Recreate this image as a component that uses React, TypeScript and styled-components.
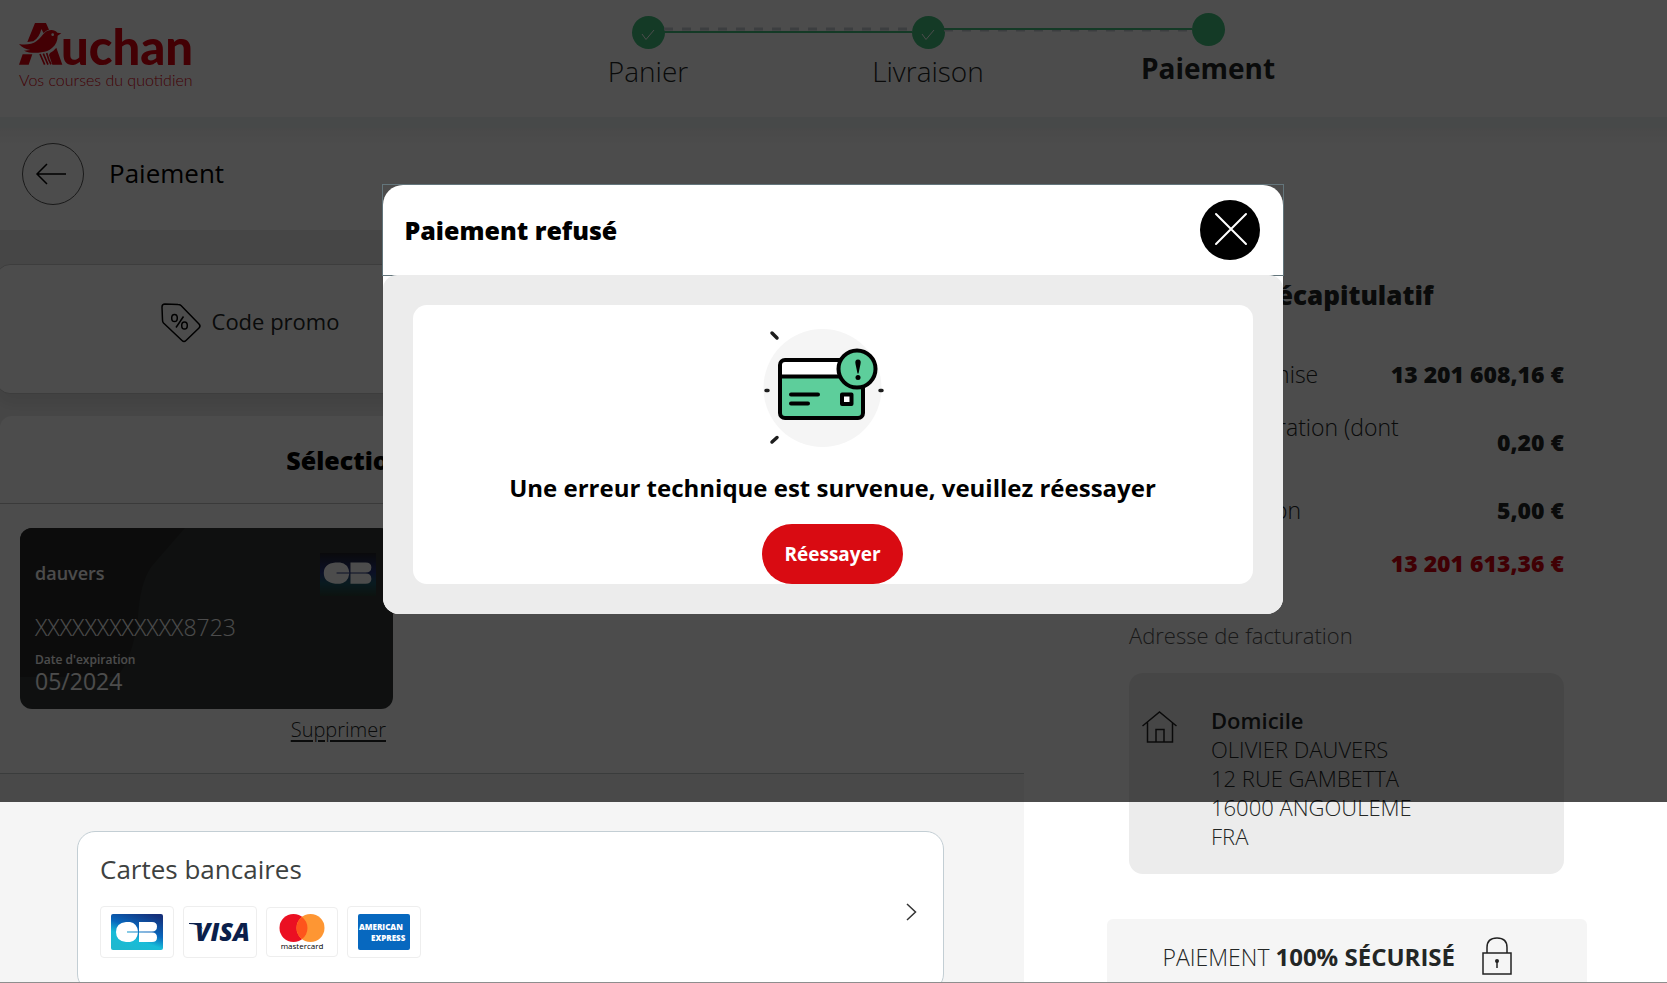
import React from 'react';
import styled, { createGlobalStyle } from 'styled-components';

const GlobalStyle = createGlobalStyle`
  *, *::before, *::after { box-sizing: border-box; }
  body { margin: 0; background: #fff; color: #232625; font-family: "Open Sans", "Noto Sans", sans-serif; }
  h1, h2, h3, p, ol, dl, dd, address { margin: 0; padding: 0; font-style: normal; }
  button { font-family: inherit; color: inherit; cursor: pointer; }
  svg { display: block; flex: none; overflow: visible; }
`;

const Page = styled.div`
  position: relative;
  height: 100vh;
  overflow: hidden;
  border-bottom: 1px solid #8e8e8e;
`;

/* ---------- header ---------- */

const Header = styled.header`
  display: flex;
  align-items: flex-start;
  height: 117px;
  padding: 0 7px 0 18px;
`;

const HomeLink = styled.a`
  padding-top: 22px;
`;

const Steps = styled.ol`
  display: flex;
  flex: 1;
  justify-content: center;
  padding-top: 13px;
  list-style: none;
`;

const Step = styled.li<{ $current?: boolean }>`
  position: relative;
  display: flex;
  flex-direction: column;
  align-items: center;
  width: 280px;
  padding-top: ${(p) => (p.$current ? 0 : 3)}px;
  font-size: 28px;
  line-height: 38px;
  font-weight: ${(p) => (p.$current ? 700 : 300)};
`;

const StepDot = styled.span`
  display: flex;
  align-items: center;
  justify-content: center;
  width: 33px;
  height: 33px;
  margin-bottom: 3px;
  padding-top: 4px;
  border-radius: 50%;
  background: #43c17f;
`;

const StepLink = styled.svg`
  position: absolute;
  top: 14px;
  left: calc(50% + 16px);
  width: calc(100% - 32px);
  height: 6px;
`;

const HeaderFade = styled.div`
  height: 26px;
  background: linear-gradient(#eff3f6 0, #eff3f6 11px, #f6f6f6 12px, #fdfdfd 26px);
`;

/* ---------- columns ---------- */

const Columns = styled.main`
  display: grid;
  grid-template-columns: minmax(0, 1024fr) minmax(0, 643fr);
`;

const Payment = styled.div`
  background: #ececec;
`;

const TitleBar = styled.div`
  display: flex;
  align-items: flex-start;
  gap: 25px;
  height: 87px;
  padding-left: 22px;
  background: #fff;
`;

const BackButton = styled.button`
  display: flex;
  align-items: center;
  justify-content: center;
  width: 62px;
  height: 62px;
  padding: 0 4px 0 0;
  border: 1px solid #555;
  border-radius: 50%;
  background: none;
`;

const PageTitle = styled.h1`
  font-size: 26px;
  line-height: 60px;
  font-weight: 500;
  color: #000;
`;

const PromoButton = styled.button`
  display: flex;
  align-items: center;
  justify-content: center;
  gap: 11px;
  width: 508px;
  height: 130px;
  margin: 34px 0 22px -4px;
  padding: 0 0 12px;
  border: 1px solid #ccc;
  border-radius: 14px;
  background: #fff;
  box-shadow: 0 10px 16px rgba(0, 0, 0, 0.08);
  font-size: 22px;
  font-weight: 500;
`;

const PromoLabel = styled.span`
  padding-bottom: 4px;
`;

const Saved = styled.section`
  border-bottom: 1px solid #c4c8c8;
  border-radius: 12px 0 0 0;
  background: #fff;
`;

const SectionTitle = styled.h2`
  padding: 26px 0 25px;
  border-bottom: 1px solid #c4c4c4;
  font-size: 25px;
  line-height: 36px;
  font-weight: 800;
  text-align: center;
  color: #000;
`;

const SavedItem = styled.div`
  display: flex;
  flex-direction: column;
  align-items: flex-end;
  width: 373px;
  margin: 0 20px;
  padding: 24px 0 29px;
`;

const BankCard = styled.article`
  position: relative;
  display: flex;
  justify-content: space-between;
  align-items: flex-start;
  width: 100%;
  height: 181px;
  padding: 25px 17px 0 15px;
  overflow: hidden;
  border-radius: 12px;
  background: #333837;
  color: #fff;
`;

const CardShade = styled.svg`
  position: absolute;
  inset: 0;
`;

const CardText = styled.div`
  position: relative;
  padding-top: 7px;
`;

const CardHolder = styled.p`
  font-size: 18px;
  line-height: 26px;
  font-weight: 600;
`;

const CardNumber = styled.p`
  margin: 26px 0 10px;
  font-size: 23px;
  line-height: 30px;
  font-weight: 300;
`;

const CardLabel = styled.p`
  font-size: 12px;
  line-height: 16px;
  font-weight: 600;
`;

const CardExpiry = styled.p`
  font-size: 23px;
  line-height: 26px;
  font-weight: 500;
`;

const RemoveLink = styled.a`
  margin: 7px 7px 0 0;
  font-size: 20px;
  line-height: 28px;
  font-weight: 300;
  color: #232625;
  text-underline-offset: 3px;
`;

const Methods = styled.section`
  padding: 57px 80px 60px 77px;
  background: #f5f5f5;
`;

const MethodButton = styled.button`
  display: flex;
  align-items: center;
  justify-content: space-between;
  width: 100%;
  padding: 19px 26px 33px 22px;
  border: 1px solid #c3ced4;
  border-radius: 18px;
  background: #fff;
  text-align: left;
`;

const Chevron = styled.svg`
  margin-top: 14px;
`;

const MethodName = styled.span`
  display: block;
  margin-bottom: 19px;
  font-size: 26px;
  line-height: 36px;
  color: #3d4140;
`;

const Brands = styled.span`
  display: flex;
  align-items: center;
  gap: 9px;
`;

const Brand = styled.span<{ $compact?: boolean }>`
  display: flex;
  align-items: center;
  justify-content: center;
  width: ${(p) => (p.$compact ? 72 : 74)}px;
  height: ${(p) => (p.$compact ? 50 : 52)}px;
  border: 1px solid #eee;
  border-radius: 4px;
`;

/* ---------- summary ---------- */

const Summary = styled.aside`
  display: flex;
  flex-direction: column;
  align-items: center;
  padding: 134px 0 0 2px;
`;

const SummaryTitle = styled.h2`
  font-size: 26px;
  line-height: 36px;
  font-weight: 800;
`;

const Amounts = styled.dl`
  display: flex;
  flex-direction: column;
  gap: 23px;
  width: 435px;
  margin-top: 46px;
  font-size: 23px;
  line-height: 30px;
`;

const Amount = styled.div<{ $total?: boolean }>`
  display: flex;
  align-items: center;
  justify-content: space-between;
  color: ${(p) => (p.$total ? '#d8000f' : 'inherit')};

  dt { max-width: 280px; font-weight: 300; }
  dd { font-weight: 800; }
`;

const AddressTitle = styled.h3`
  width: 435px;
  margin: 42px 0 23px;
  font-size: 22px;
  line-height: 30px;
  font-weight: 300;
  color: #555;
`;

const AddressCard = styled.div`
  display: flex;
  align-items: flex-start;
  gap: 34px;
  width: 435px;
  padding: 33px 13px 23px;
  border-radius: 14px;
  background: #ececec;
  font-size: 22px;
  line-height: 29px;
  font-weight: 300;

  svg { margin-top: 5px; }
  strong { font-weight: 600; }
`;

const Secure = styled.div`
  display: flex;
  align-items: center;
  gap: 27px;
  width: 480px;
  height: 74px;
  margin-top: 45px;
  padding-left: 56px;
  border-radius: 6px;
  background: #f5f5f5;
  font-size: 23px;
  font-weight: 300;

  strong { font-size: 24px; font-weight: 700; }
`;

/* ---------- dialog ---------- */

const Backdrop = styled.div`
  position: absolute;
  inset: 0 0 auto;
  display: flex;
  justify-content: center;
  align-items: flex-start;
  height: 802px;
  padding: 184px 2px 0 0;
  background: rgba(0, 0, 0, 0.7);
`;

const Dialog = styled.section`
  display: flex;
  flex-direction: column;
  align-items: center;
  color: #000;
`;

const DialogFrame = styled.div`
  border: 1px solid #63757b;
`;

const DialogHeader = styled.header`
  display: flex;
  align-items: center;
  justify-content: space-between;
  width: 900px;
  height: 90px;
  padding: 0 23px 0 22px;
  border-radius: 20px 20px 0 0;
  background: #fff;
`;

const DialogTitle = styled.h2`
  font-size: 25px;
  line-height: 34px;
  font-weight: 800;
`;

const CloseButton = styled.button`
  display: flex;
  align-items: center;
  justify-content: center;
  width: 60px;
  height: 60px;
  padding: 0 0 3px 2px;
  border: 0;
  border-radius: 50%;
  background: #000;
`;

const DialogBody = styled.div`
  width: 900px;
  border-radius: 0 0 16px 16px;
  background: #fff;
`;

const DialogCanvas = styled.div`
  margin-top: -1px;
  padding: 30px;
  border-radius: 14px 14px 16px 16px;
  background: #ececec;
`;

const Panel = styled.div`
  display: flex;
  flex-direction: column;
  align-items: center;
  padding-top: 8px;
  border-radius: 14px;
  background: #fff;
`;

const Message = styled.p`
  margin: 12px 0 19px;
  font-size: 24px;
  line-height: 34px;
  font-weight: 700;
`;

const RetryButton = styled.button`
  width: 141px;
  height: 60px;
  padding: 0;
  border: 0;
  border-radius: 30px;
  background: #d90b12;
  color: #fff;
  font-size: 19px;
  font-weight: 700;
`;

/* ---------- drawings ---------- */

const LogoWord = styled.text`
  font: 900 49px Lato, sans-serif;
`;
const LogoTagline = styled.text`
  font: 300 16px Lato, sans-serif;
`;
const BrandWord = styled.text<{ $size: number }>`
  font-family: "Open Sans", sans-serif;
  font-size: ${(p) => p.$size}px;
  font-weight: 800;
`;
const BrandCaption = styled.text`
  font: 500 8px "Open Sans", sans-serif;
`;

const Logo = () => (
  <svg width="178" height="70" viewBox="18 22 178 70" fill="#e1000f">
    <g transform="scale(.3333)">
      <path d="M105 69H138L147 89C139 91 134 95 131 100L124 87C120 104 113 116 100 124L82 126Z" />
      <path d="M57 132C75 136 97 133 109 124C121 115 127 104 134 98C144 88 164 87 172 98L184 100L173 107C173 122 168 134 156 144C147 152 138 155 124 157C106 160 86 159 72 152L91 150C78 148 65 142 57 132Z" />
      <path d="M68 163H97L86 194H57Z" />
      <path d="M150 159Q162 152 169 143L187 194H157L147 165Z" />
      <path d="M120 162L134 194M130 161L144 194M140 159L146 178L153 193" fill="none" stroke="#e1000f" strokeWidth="5" />
      <circle cx="158" cy="104" r="4" fill="#fff" />
    </g>
    <LogoWord x="61" y="65">uchan</LogoWord>
    <LogoTagline x="19" y="86">Vos courses du quotidien</LogoTagline>
  </svg>
);

const CheckMark = () => (
  <svg width="14" height="12" viewBox="0 0 14 12" fill="none" stroke="#fff" strokeWidth="1">
    <path d="M1 5L5 10.500L13 1" />
  </svg>
);

const CbLogo = ({ width, height, muted }: { width: number; height: number; muted?: boolean }) => {
  const id = muted ? 'cb-muted' : 'cb-full';
  return (
    <svg width={width} height={height} viewBox={`0 0 ${width} ${height}`}>
      <defs>
        <linearGradient id={id} x1={muted ? 0.5 : 0.8} y1="0" x2={muted ? 0.5 : 0.3} y2="1">
          <stop offset="0" stopColor={muted ? '#232329' : '#15307a'} />
          <stop offset=".45" stopColor={muted ? '#26357e' : '#0867bd'} />
          <stop offset=".7" stopColor={muted ? '#1f5a6b' : '#18bcd8'} />
          <stop offset="1" stopColor={muted ? '#2b3f35' : '#1fb8cf'} />
        </linearGradient>
      </defs>
      <rect width={width} height={height} rx={muted ? 0 : 2} fill={`url(#${id})`} />
      <g transform={muted ? 'translate(-2 1) scale(1.16 1.06)' : undefined} fill="#fff">
        <path d="M15 8H19Q26 9 27 17.500H16V18.500H27Q26 27 19 28H15Q5 27 5 18Q5 9 15 8Z" />
        <path d="M28 8H41Q46 8 46 12.500Q46 17.500 41 17.500H28ZM28 18.500H41Q46 18.500 46 23.500Q46 28 41 28H28Z" />
      </g>
    </svg>
  );
};

const CardBrand = styled.div`
  position: relative;
`;

const TagIcon = () => (
  <svg width="40" height="40" viewBox="0 0 40 40" fill="none" stroke="#000" strokeWidth="1.500" strokeLinejoin="round">
    <path d="M4 1L17 1.500Q19 1.500 20 2.500L38 21Q40 23 38 25L25 37.500Q23 39.500 21 37.500L2.500 20Q1.500 19 1.500 17L1 4Q1 1 4 1Z" />
    <ellipse cx="13.500" cy="15" rx="2.800" ry="3.600" />
    <ellipse cx="23.500" cy="22.500" rx="2.800" ry="3.600" />
    <path d="M22.500 13.500L15 24.500" />
  </svg>
);

const ErrorCard = () => (
  <svg width="140" height="146" viewBox="23 3 140 146" fill="none" stroke="#000">
    <circle cx="82.500" cy="78" r="59" fill="#f5f5f5" stroke="none" />
    <rect x="40" y="50" width="83" height="58" rx="5" fill="#5dce9b" stroke="none" />
    <path d="M40 66V55Q40 50 45 50H118V66Z" fill="#fff" stroke="none" />
    <path d="M40 66.500H108" strokeWidth="4" />
    <rect x="40" y="50" width="83" height="58" rx="5" strokeWidth="4" />
    <path d="M51 84.500H78M51 93.500H68" strokeWidth="4" strokeLinecap="round" />
    <rect x="102" y="84.500" width="9.500" height="9.500" fill="#fff" strokeWidth="4" strokeLinejoin="round" />
    <circle cx="117" cy="59" r="18.500" fill="#5dce9b" strokeWidth="4" />
    <path d="M118 49.500Q121.500 49.500 120.500 54L118.500 63.500H117.500L115.500 54Q114.500 49.500 118 49.500Z" fill="#000" stroke="none" />
    <circle cx="118" cy="67.500" r="2.500" fill="#000" stroke="none" />
    <path d="M32 23L37 28M26 80.500H28M140 80.500H142M32 132L37 127.500" stroke="#1d1d1d" strokeWidth="3.500" strokeLinecap="round" />
  </svg>
);

const HouseIcon = () => (
  <svg width="35" height="32" viewBox="0 0 35 32" fill="none" stroke="#222" strokeWidth="1.500">
    <path d="M.500 15L17.500 1L34.500 15M5.500 11.500V31H30.500V11.500M14 31V18.500H22V31" />
  </svg>
);

const LockIcon = () => (
  <svg width="30" height="38" viewBox="0 0 30 38" fill="none" stroke="#222" strokeWidth="1.500">
    <rect x="1" y="16" width="28" height="21" />
    <path d="M5 16V10.500Q5 1 15 1Q25 1 25 10.500V16M15 25V31" />
    <circle cx="15" cy="24" r="2" fill="#222" stroke="none" />
  </svg>
);

const Amex = () => (
  <svg width="52" height="36" viewBox="0 0 52 36">
    <rect width="52" height="36" rx="2" fill="#0768bf" />
    <g fill="#fff">
      <BrandWord $size={8} x="1" y="16">AMERICAN</BrandWord>
      <BrandWord $size={8} x="13" y="27">EXPRESS</BrandWord>
    </g>
  </svg>
);

const steps = [
  { label: 'Panier', line: 16, dash: 13 },
  { label: 'Livraison', line: 13, dash: 14 },
  { label: 'Paiement' },
];

const amounts = [
  { label: 'Total avant remise', value: '13 201 608,16 €' },
  { label: 'Frais de préparation (dont TVA)', value: '0,20 €' },
  { label: 'Frais de livraison', value: '5,00 €' },
  { label: 'Total', value: '13 201 613,36 €', total: true },
];

export default function App() {
  return (
    <Page>
      <GlobalStyle />
      <Header>
        <HomeLink href="#" aria-label="Auchan"><Logo /></HomeLink>
        <Steps>
          {steps.map((s) => (
            <Step key={s.label} $current={s.line === undefined}>
              <StepDot>{s.line !== undefined && <CheckMark />}</StepDot>
              {s.line !== undefined && (
                <StepLink>
                  <line x1="0" x2="100%" y1={s.dash! - 11} y2={s.dash! - 11} stroke="#c9d0d5" strokeWidth="3" strokeDasharray="9 9" />
                  <line x1="0" x2="100%" y1={s.line - 11} y2={s.line - 11} stroke="#43c17f" strokeWidth="2" />
                </StepLink>
              )}
              {s.label}
            </Step>
          ))}
        </Steps>
      </Header>
      <HeaderFade />

      <Columns>
        <Payment>
          <TitleBar>
            <BackButton type="button" aria-label="Retour">
              <svg width="32" height="22" viewBox="0 0 32 22" fill="none" stroke="#000" strokeWidth="1.500">
                <path d="M31 11H2M12 1L2 11L12 21" />
              </svg>
            </BackButton>
            <PageTitle>Paiement</PageTitle>
          </TitleBar>
          <PromoButton type="button"><TagIcon /><PromoLabel>Code promo</PromoLabel></PromoButton>
          <Saved>
            <SectionTitle>Sélectionnez un mode de paiement</SectionTitle>
            <SavedItem>
              <BankCard>
                <CardShade width="373" height="181" viewBox="0 0 373 181">
                  <path d="M0 0H165L132 38Q120 54 118 90Q113 130 97 149H0Z" fill="#2b2b2b" />
                </CardShade>
                <CardText>
                  <CardHolder>dauvers</CardHolder>
                  <CardNumber>XXXXXXXXXXXX8723</CardNumber>
                  <CardLabel>Date d'expiration</CardLabel>
                  <CardExpiry>05/2024</CardExpiry>
                </CardText>
                <CardBrand><CbLogo width={56} height={43} muted /></CardBrand>
              </BankCard>
              <RemoveLink href="#">Supprimer</RemoveLink>
            </SavedItem>
          </Saved>
          <Methods>
            <MethodButton type="button">
              <span>
                <MethodName>Cartes bancaires</MethodName>
                <Brands>
                  <Brand><CbLogo width={52} height={36} /></Brand>
                  <Brand>
                    <svg width="62" height="24" viewBox="0 0 62 24" fill="#0b1f4b">
                      <path d="M0 3H10L14 9Q9 4 0 4Z" />
                      <BrandWord $size={25} x="6" y="21" fontStyle="italic">VISA</BrandWord>
                    </svg>
                  </Brand>
                  <Brand $compact>
                    <svg width="46" height="38" viewBox="0 0 46 38">
                      <circle cx="14.500" cy="15" r="14" fill="#eb1022" />
                      <circle cx="31.500" cy="15" r="14" fill="#fe9633" />
                      <path d="M23 3.900A14 14 0 0 1 23 26.100A14 14 0 0 1 23 3.900Z" fill="#fe541c" />
                      <BrandCaption x="23" y="36" textAnchor="middle">mastercard</BrandCaption>
                    </svg>
                  </Brand>
                  <Brand><Amex /></Brand>
                </Brands>
              </span>
              <Chevron width="11" height="18" viewBox="0 0 11 18" fill="none" stroke="#333" strokeWidth="1.500">
                <path d="M1 1L9.500 9L1 17" />
              </Chevron>
            </MethodButton>
          </Methods>
        </Payment>

        <Summary>
          <SummaryTitle>Récapitulatif</SummaryTitle>
          <Amounts>
            {amounts.map((a) => (
              <Amount key={a.label} $total={a.total}>
                <dt>{a.label}</dt>
                <dd>{a.value}</dd>
              </Amount>
            ))}
          </Amounts>
          <AddressTitle>Adresse de facturation</AddressTitle>
          <AddressCard>
            <HouseIcon />
            <address>
              <strong>Domicile</strong><br />
              OLIVIER DAUVERS<br />
              12 RUE GAMBETTA<br />
              16000 ANGOULEME<br />
              FRA
            </address>
          </AddressCard>
          <Secure>
            <span>PAIEMENT <strong>100% SÉCURISÉ</strong></span>
            <LockIcon />
          </Secure>
        </Summary>
      </Columns>

      <Backdrop>
        <Dialog role="dialog" aria-modal="true" aria-labelledby="dialog-title">
          <DialogFrame>
            <DialogHeader>
              <DialogTitle id="dialog-title">Paiement refusé</DialogTitle>
              <CloseButton type="button" aria-label="Fermer">
                <svg width="32" height="32" viewBox="0 0 32 32" stroke="#fff" strokeWidth="2" strokeLinecap="round">
                  <path d="M1 1L31 31M31 1L1 31" />
                </svg>
              </CloseButton>
            </DialogHeader>
          </DialogFrame>
          <DialogBody>
            <DialogCanvas>
              <Panel>
                <ErrorCard />
                <Message>Une erreur technique est survenue, veuillez réessayer</Message>
                <RetryButton type="button">Réessayer</RetryButton>
              </Panel>
            </DialogCanvas>
          </DialogBody>
        </Dialog>
      </Backdrop>
    </Page>
  );
}
